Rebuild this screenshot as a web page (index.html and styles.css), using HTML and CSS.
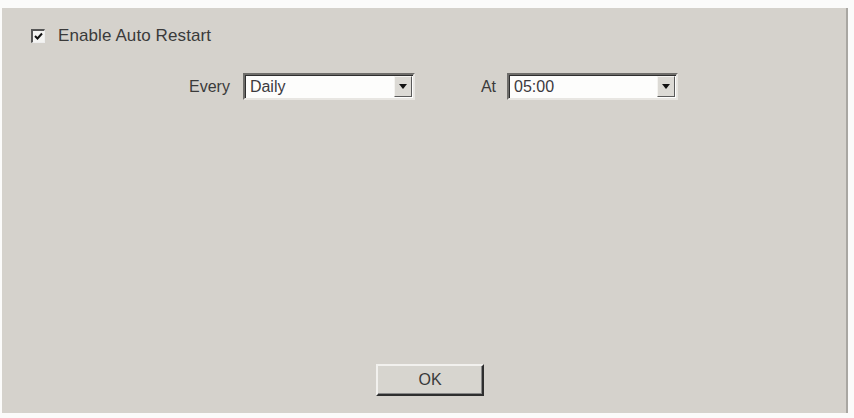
FILE: index.html
```html
<!DOCTYPE html>
<html>
<head>
<meta charset="utf-8">
<link rel="stylesheet" href="styles.css">
</head>
<body>
<div class="panel">
  <div class="check-row">
    <span class="checkbox">
      <svg width="9" height="9" viewBox="0 0 9 9"><path d="M1 4 L3.5 6.5 L8 1.5" fill="none" stroke="#111" stroke-width="2"/></svg>
    </span>
    <span class="label label-check">Enable Auto Restart</span>
  </div>
  <div class="select-row">
    <span class="label every">Every</span>
    <div class="combo combo-every">
      <span class="combo-text">Daily</span>
      <span class="combo-btn"><span class="tri"></span></span>
    </div>
    <span class="label at">At</span>
    <div class="combo combo-at">
      <span class="combo-text">05:00</span>
      <span class="combo-btn"><span class="tri"></span></span>
    </div>
  </div>
  <div class="button-row">
    <button class="ok">OK</button>
  </div>
</div>
</body>
</html>
```
FILE: styles.css
```css
html, body {
  margin: 0;
  padding: 0;
  background: #fbfbfa;
}
body {
  width: 854px;
  height: 418px;
  overflow: hidden;
  font-family: "Liberation Sans", Arial, sans-serif;
  color: #3a3a3a;
}
.panel {
  margin: 8px 0 0 2px;
  width: 846px;
  height: 405px;
  background: #d5d2cc;
  border-right: 2px solid #a9a7a2;
  box-sizing: border-box;
  display: flex;
  flex-direction: column;
}
.check-row {
  display: flex;
  align-items: center;
  margin-top: 21px;
  padding-left: 29px;
  height: 14px;
  gap: 13px;
}
.checkbox {
  width: 14px;
  height: 14px;
  box-sizing: border-box;
  background: #f4f4f2;
  border-top: 2px solid #555;
  border-left: 2px solid #555;
  border-right: 1px solid #eee;
  border-bottom: 1px solid #eee;
  display: flex;
  align-items: center;
  justify-content: center;
}
.label {
  font-size: 16px;
  line-height: 18px;
}
.label-check {
  font-size: 17px;
  letter-spacing: 0.1px;
}
.select-row {
  display: flex;
  align-items: center;
  margin-top: 30px;
  padding-left: 187px;
  height: 27px;
}
.every { margin-right: 13px; }
.at { margin-left: 66px; margin-right: 11px; }
.combo {
  height: 27px;
  box-sizing: border-box;
  background: #fdfdfc;
  border-top: 2px solid #6e6d6a;
  border-left: 2px solid #6e6d6a;
  border-right: 2px solid #e8e6e2;
  border-bottom: 2px solid #e8e6e2;
  box-shadow: inset 1px 1px 0 #2f2f2f;
  display: flex;
  align-items: center;
  justify-content: space-between;
  padding: 0 1px 0 5px;
}
.combo-every { width: 172px; }
.combo-at { width: 171px; }
.combo-text {
  font-size: 16px;
  color: #3c3a3f;
}
.combo-btn {
  width: 18px;
  height: 21px;
  box-sizing: border-box;
  background: #dcdad5;
  border-top: 1px solid #f4f3f0;
  border-left: 1px solid #f4f3f0;
  border-right: 1px solid #5a5a5a;
  border-bottom: 1px solid #5a5a5a;
  display: flex;
  align-items: center;
  justify-content: center;
}
.tri {
  width: 0;
  height: 0;
  border-left: 4px solid transparent;
  border-right: 4px solid transparent;
  border-top: 5px solid #111;
}
.button-row {
  margin-top: auto;
  padding-left: 374px;
  padding-bottom: 17px;
  display: flex;
}
.ok {
  width: 108px;
  height: 32px;
  box-sizing: border-box;
  background: #d7d5cf;
  border-top: 2px solid #f2f1ee;
  border-left: 2px solid #f2f1ee;
  border-right: 2px solid #2e2e2e;
  border-bottom: 2px solid #2e2e2e;
  box-shadow: inset -1px -1px 0 #888;
  font-family: "Liberation Sans", Arial, sans-serif;
  font-size: 16px;
  color: #3a3a3a;
  padding: 0;
}
```
